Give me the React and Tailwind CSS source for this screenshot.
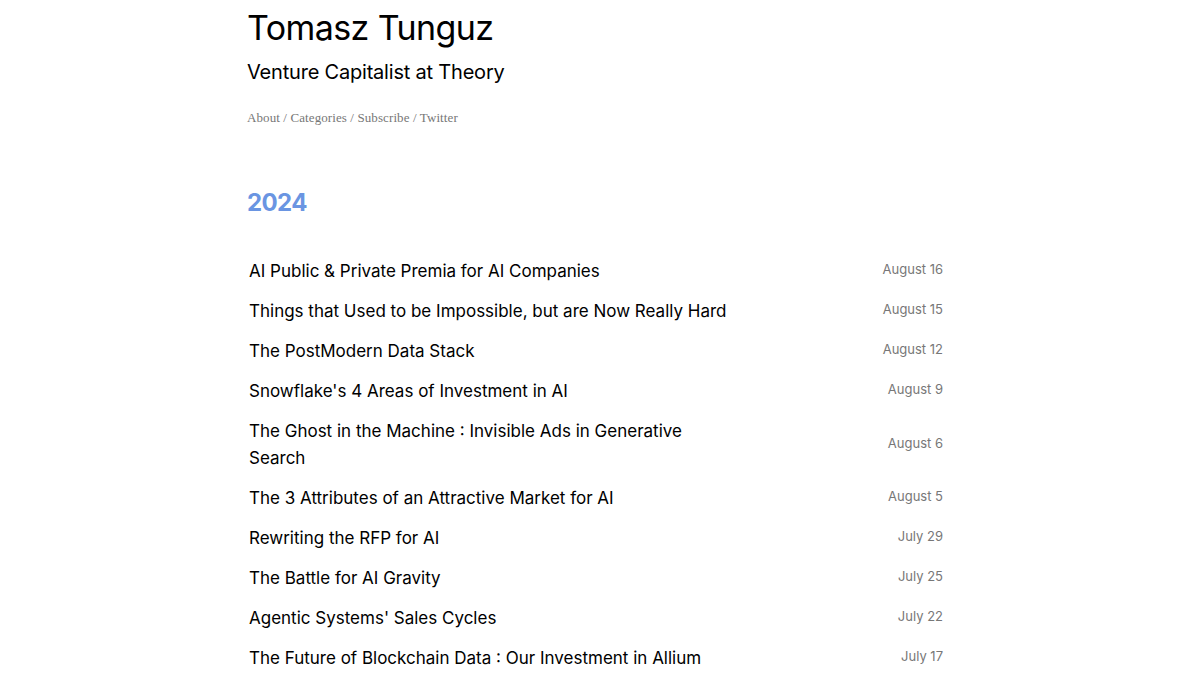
import React from 'react';

const posts = [
  { title: 'AI Public & Private Premia for AI Companies', date: 'August 16' },
  { title: 'Things that Used to be Impossible, but are Now Really Hard', date: 'August 15' },
  { title: 'The PostModern Data Stack', date: 'August 12' },
  { title: "Snowflake's 4 Areas of Investment in AI", date: 'August 9' },
  { title: 'The Ghost in the Machine : Invisible Ads in Generative Search', date: 'August 6' },
  { title: 'The 3 Attributes of an Attractive Market for AI', date: 'August 5' },
  { title: 'Rewriting the RFP for AI', date: 'July 29' },
  { title: 'The Battle for AI Gravity', date: 'July 25' },
  { title: "Agentic Systems' Sales Cycles", date: 'July 22' },
  { title: 'The Future of Blockchain Data : Our Investment in Allium', date: 'July 17' },
];

const App = () => {
  return (
    <div className="min-h-screen bg-white font-['Inter',sans-serif] text-black">
      <div className="mx-auto w-[696px] pt-[6px]">
        <h1 className="text-[34px] leading-[44px] tracking-[-0.6px]">Tomasz Tunguz</h1>
        <p className="mt-[9px] text-[20px] leading-[26px] tracking-[-0.2px]">Venture Capitalist at Theory</p>
        <nav className="mt-[23px] font-['Liberation_Serif',serif] text-[13px] tracking-[0.1px] text-[#777]">
          About / Categories / Subscribe / Twitter
        </nav>

        <h2 className="mt-[57px] text-[24px] font-bold tracking-[-0.6px] text-[#6a95e2]">2024</h2>

        <ul className="mt-[31px]">
          {posts.map((p) => (
            <li key={p.title} className="flex items-center justify-between py-[6.5px] pl-[2px]">
              <a className="w-[480px] text-[17px] leading-[27px]">{p.title}</a>
              <span className="-mt-[3px] text-[13px] text-[#777]">{p.date}</span>
            </li>
          ))}
        </ul>
      </div>
    </div>
  );
};

export default App;
